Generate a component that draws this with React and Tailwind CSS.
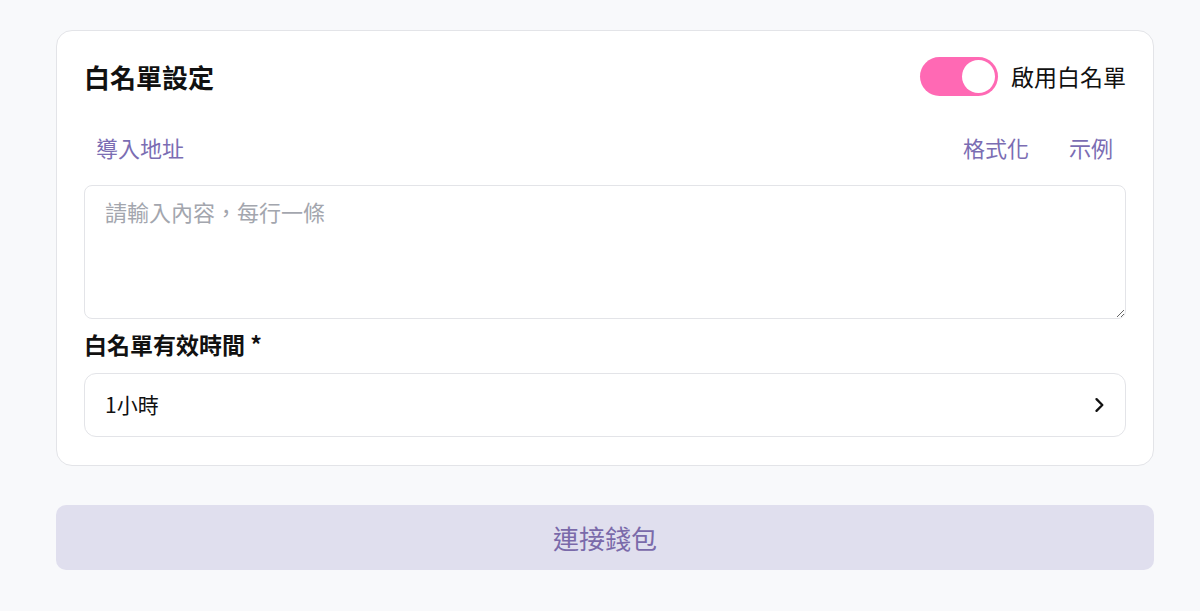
import React from 'react'

function Toggle() {
  return (
    <div className="w-[78px] h-[39px] rounded-full bg-[#ff69b4] flex items-center justify-end p-[3px]">
      <div className="w-[33px] h-[33px] rounded-full bg-white" />
    </div>
  )
}

function ChevronRight() {
  return (
    <svg width="20" height="20" viewBox="0 0 24 24" fill="none" stroke="#111" strokeWidth="2.8" strokeLinecap="round" strokeLinejoin="round">
      <path d="M9 5l7 7-7 7" />
    </svg>
  )
}

export default function App() {
  return (
    <div
      className="min-h-[611px] bg-[#f8f9fb] pl-[56px] pr-[46px] pt-[30px]"
      style={{ fontFamily: '"Noto Sans CJK TC", "Noto Sans", sans-serif' }}
    >
      {/* Whitelist card */}
      <section className="bg-white border border-[#e3e4e8] rounded-[16px] pl-[27px] pr-[27px] pt-[25px] pb-[28px]">
        <div className="flex items-center justify-between h-[41px]">
          <h2 className="text-[26px] font-bold text-[#111]">白名單設定</h2>
          <div className="flex items-center gap-[13px]">
            <Toggle />
            <span className="text-[23px] text-[#111]">啟用白名單</span>
          </div>
        </div>

        <div className="flex items-center justify-between mt-[35px] h-[30px] pl-[12px] pr-[13px]">
          <button className="text-[22px] text-[#7b6db3]">導入地址</button>
          <div className="flex items-center gap-[40px]">
            <button className="text-[22px] text-[#7b6db3]">格式化</button>
            <button className="text-[22px] text-[#7b6db3]">示例</button>
          </div>
        </div>

        <textarea
          className="mt-[23px] block w-full h-[134px] border border-[#e3e4e8] rounded-[8px] px-[20px] py-[9px] text-[22px] placeholder:text-[#a3a6ae] outline-none"
          placeholder="請輸入內容，每行一條"
        />

        <div className="mt-[10px] h-[30px] flex items-center text-[23px] font-bold text-[#111]">
          白名單有效時間 *
        </div>

        <div className="mt-[14px] h-[64px] border border-[#e3e4e8] rounded-[12px] flex items-center justify-between pl-[20px] pr-[16px]">
          <span className="text-[21px] text-[#111]">1小時</span>
          <ChevronRight />
        </div>
      </section>

      <button className="mt-[39px] w-full h-[65px] rounded-[10px] bg-[#e0dfee] text-[26px] text-[#7a6aaa]">
        連接錢包
      </button>
    </div>
  )
}
